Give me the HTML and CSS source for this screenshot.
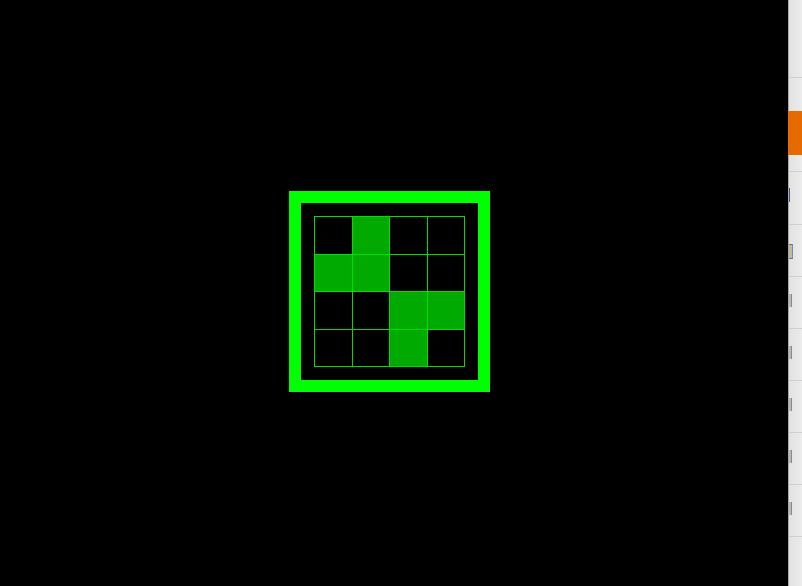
FILE: index.html
```html
<!DOCTYPE html>
<html lang="en">
<head>
    <meta charset="UTF-8">
    <meta name="viewport" content="width=device-width, initial-scale=1.0">
    <title>Grid Pattern</title>
    <link rel="stylesheet" href="styles.css">
</head>
<body>
    <div class="stage">
        <div class="frame">
            <div class="grid">
                <div class="cell"></div>
                <div class="cell on"></div>
                <div class="cell"></div>
                <div class="cell"></div>
                <div class="cell on"></div>
                <div class="cell on"></div>
                <div class="cell"></div>
                <div class="cell"></div>
                <div class="cell"></div>
                <div class="cell"></div>
                <div class="cell on"></div>
                <div class="cell on"></div>
                <div class="cell"></div>
                <div class="cell"></div>
                <div class="cell on"></div>
                <div class="cell"></div>
            </div>
        </div>
    </div>
    <div class="sidebar">
        <div class="side-row top"></div>
        <div class="side-row tall"><div class="orange"></div></div>
        <div class="side-row first"><span class="mark glyph"></span></div>
        <div class="side-row"><span class="mark box"></span></div>
        <div class="side-row"><span class="mark"></span></div>
        <div class="side-row"><span class="mark"></span></div>
        <div class="side-row"><span class="mark"></span></div>
        <div class="side-row"><span class="mark"></span></div>
        <div class="side-row"><span class="mark"></span></div>
        <div class="side-row last"></div>
    </div>
</body>
</html>
```
FILE: styles.css
```css
body {
    margin: 0;
    height: 586px;
    display: flex;
    background: #000;
    overflow: hidden;
    font-family: "Liberation Sans", Arial, sans-serif;
}
.stage {
    flex: 1;
    padding: 191px 0 0 289px;
}
.frame {
    width: 151px;
    height: 151px;
    border: 12px solid #00ff00;
    padding: 13px;
}
.grid {
    width: 149px;
    height: 149px;
    padding: 1px;
    display: grid;
    grid-template-columns: repeat(4, 1fr);
    grid-template-rows: repeat(4, 1fr);
    gap: 1px;
    background-color: #00dd00;
}
.cell {
    background-color: #000;
}
.cell.on {
    background-color: #00aa00;
}
.sidebar {
    width: 13px;
    display: flex;
    flex-direction: column;
    border-left: 1px solid #a8a8a8;
    background: linear-gradient(to right, #e2e2e2, #ececec);
}
.side-row {
    height: 51px;
    border-bottom: 1px solid #c9d1d9;
    position: relative;
}
.side-row.top {
    height: 77px;
}
.side-row.tall {
    height: 93px;
}
.side-row.first {
    height: 52px;
}
.side-row.last {
    flex: 1;
    border-bottom: none;
}
.orange {
    margin-top: 33px;
    height: 44px;
    margin-left: -1px;
    background-color: #e56b00;
}
.mark {
    position: absolute;
    left: 0;
    top: 17px;
    width: 2px;
    height: 13px;
    border-right: 1px solid #6a8fc0;
    background-color: #c8b89a;
}
.mark.box {
    top: 19px;
    width: 3px;
    border-top: 1px solid #777;
    border-bottom: 1px solid #777;
}
.mark.glyph {
    top: 16px;
    height: 14px;
    background: none;
    border-right: none;
    border-left: 1px solid #3a5a8a;
}
```
